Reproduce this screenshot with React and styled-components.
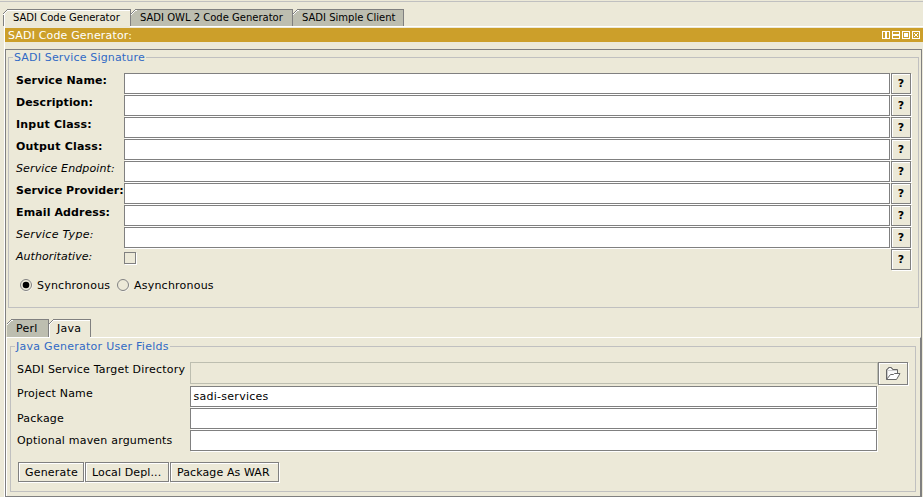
import React from "react";
import styled, { createGlobalStyle, css } from "styled-components";

const BG = "#ece9d8";
const GRAY = "#808080";
const SOFT = "#c0c0c0";
const DIM = "#bdbeb0";

const GlobalStyle = createGlobalStyle`
  * { box-sizing: border-box; }
  body { margin: 0; background: ${BG}; overflow: hidden; }
`;

const Window = styled.div`
  width: 923px;
  height: 497px;
  padding-top: 3px;
  background: linear-gradient(${SOFT}, ${SOFT}) 0 1px / 100% 1px no-repeat, ${BG};
  font: 11px/13px "DejaVu Sans", sans-serif;
  letter-spacing: 0.12px;
  color: #000;
  white-space: nowrap;
  display: flex;
  flex-direction: column;
`;

const TabStrip = styled.div`
  display: flex;
  flex: none;
  height: ${(p) => p.$height}px;
  margin: ${(p) => p.$margin};
`;

const TabBox = styled.div`
  position: relative;
  width: ${(p) => p.$width}px;
  height: 100%;
  border-top: 1px solid ${GRAY};
  border-right: 1px solid ${GRAY};
  background: ${(p) => (p.$active ? BG : DIM)};
  box-shadow: ${(p) => (p.$active ? "inset 1px 1px 0 #fff" : "none")};
  padding: ${(p) => p.$pad};
  letter-spacing: 0.25px;
  ${(p) =>
    p.$edge &&
    css`
      border-left: 1px solid ${GRAY};
    `}
  ${(p) =>
    p.$small &&
    css`
      font-size: 10px;
      line-height: 11px;
      letter-spacing: 0;
    `}
  ${(p) =>
    p.$active &&
    css`
      /* opens the pane's highlight line below the selected tab */
      &::after {
        content: "";
        position: absolute;
        left: 1px;
        right: 0;
        bottom: -1px;
        height: 1px;
        background: ${BG};
      }
    `}
`;

const Corner = styled.svg`
  position: absolute;
  left: ${(p) => (p.$edge ? -1 : 0)}px;
  top: -1px;
`;

function Tab({ children, ...rest }) {
  return (
    <TabBox {...rest}>
      <Corner $edge={rest.$edge} width="7" height="7" shapeRendering="crispEdges">
        <path d="M0 0h5v1h-1v1h-1v1h-1v1h-1v1h-1z" fill={BG} />
        <path
          d="M4 0h1v1h-1zM3 1h1v1h-1zM2 2h1v1h-1zM1 3h1v1h-1zM0 4h1v1h-1z"
          fill={GRAY}
        />
        <path
          d="M5 1h1v1h-2v1h-1v1h-1v1h-1v1h-1v-1h1v-1h1v-1h1v-1h1v-1z"
          fill="#fff"
        />
      </Corner>
      {children}
    </TabBox>
  );
}

const View = styled.div`
  flex: 1;
  min-height: 0;
  margin-left: 4px;
  padding-top: 1px;
  border-left: 1px solid #fff;
  border-top: 1px solid #fff;
`;

const TitleBar = styled.div`
  height: 14px;
  background: #cc9f2a;
  color: #fff;
  padding: 1px 3px 0;
  letter-spacing: 0.16px;
  display: flex;
  justify-content: space-between;
`;

const Controls = styled.div`
  display: flex;
  padding-top: 2px;
`;

const Body = styled.div`
  width: 917px;
  height: 448px;
  margin-top: 7px;
  border: 1px solid ${GRAY};
  display: flex;
  flex-direction: column;
`;

const Pane = styled.div`
  flex: 1;
  border-top: 1px solid #fff;
  border-left: 1px solid #fff;
  border-right: 1px solid ${GRAY};
`;

const Group = styled.section`
  flex: none;
  border: 1px solid ${SOFT};
  width: ${(p) => p.$width}px;
  height: ${(p) => p.$height}px;
  margin: ${(p) => p.$margin};
`;

const Legend = styled.h2`
  width: max-content;
  height: 13px;
  margin: -7px 0 9px 4px;
  padding: 0 1px;
  background: ${BG};
  color: #316ac5;
  font: inherit;
  letter-spacing: ${(p) => p.$ls}px;
`;

const Row = styled.div`
  display: grid;
  grid-template-columns: 108px 766px 21px;
  height: 22px;
  margin-left: 7px;
`;

const Label = styled.label`
  padding-top: 1px;
  font-weight: ${(p) => (p.$required ? 700 : 400)};
  font-style: ${(p) => (p.$required ? "normal" : "italic")};
  letter-spacing: ${(p) => p.$ls ?? 0.12}px;
`;

const Input = styled.div`
  height: 21px;
  border: 1px solid ${GRAY};
  background: #fff;
  box-shadow: 1px 1px 0 #fff;
  padding: 3px 2.5px;
  letter-spacing: 0.27px;
`;

const Button = styled.button`
  width: ${(p) => p.$width}px;
  height: ${(p) => p.$height || 21}px;
  padding: 0;
  border: 1px solid ${GRAY};
  border-radius: 0;
  background: ${BG};
  box-shadow: inset 1px 1px 0 #fff, 1px 1px 0 #fff;
  font: inherit;
  letter-spacing: ${(p) => p.$ls ?? 0.12}px;
  color: #000;
  display: flex;
  align-items: center;
  justify-content: center;
`;

const ActionButton = styled(Button)`
  justify-content: flex-start;
  padding-left: ${(p) => p.$inset}px;
`;

const Help = styled(Button)`
  margin-left: 1px;
  font-weight: 700;
`;

const Check = styled.div`
  width: 12px;
  height: 12px;
  margin-top: 3px;
  border: 1px solid ${GRAY};
  box-shadow: 1px 1px 0 #fff;
`;

const Radios = styled.div`
  display: flex;
  margin: 8px 0 0 11px;
`;

const RadioLabel = styled.label`
  display: flex;
  width: 97px;
  gap: 4px;
  letter-spacing: 0.22px;
`;

const Field = styled.div`
  display: grid;
  grid-template-columns: 173px ${(p) => p.$width}px auto;
  height: ${(p) => p.$height}px;
  margin-left: 6px;
`;

const FieldLabel = styled.label`
  padding-top: ${(p) => p.$top}px;
  letter-spacing: 0.2px;
`;

const DisabledInput = styled.div`
  height: 22px;
  border: 1px solid ${DIM};
`;

const Actions = styled.div`
  display: flex;
  gap: 1px;
  margin: 10px 0 0 7px;
`;

const rows = [
  { name: "Service Name:", required: true },
  { name: "Description:", required: true },
  { name: "Input Class:", required: true, ls: 0.2 },
  { name: "Output Class:", required: true, ls: 0.2 },
  { name: "Service Endpoint:", ls: 0.12 },
  { name: "Service Provider:", required: true, ls: 0.06 },
  { name: "Email Address:", required: true },
  { name: "Service Type:", ls: 0.3 },
  { name: "Authoritative:", check: true, ls: 0.06 },
];

const fields = [
  { name: "Project Name", value: "sadi-services", top: 1 },
  { name: "Package", top: 4 },
  { name: "Optional maven arguments", top: 4 },
];

function Radio({ on }) {
  return (
    <svg width="13" height="13">
      <circle cx="6.5" cy="6.5" r="5.5" fill="none" stroke="#fff" />
      <circle cx="6" cy="6" r="5.5" fill={BG} stroke={GRAY} />
      {on && <circle cx="6" cy="6" r="3.3" />}
    </svg>
  );
}

function WindowIcons() {
  return (
    <svg width="38" height="8" shapeRendering="crispEdges" fill="none" stroke="#fff">
      <path d="M.5 .5h7v7h-7zM10.5 .5h7v7h-7zM20.5 .5h7v7h-7zM30.5 .5h7v7h-7z" />
      <path
        d="M3 1h2v6h-2zM11 3h6v2h-6zM22 2h4v4h-4zM32 2h1v1h-1zM35 2h1v1h-1zM33 3h2v2h-2zM32 5h1v1h-1zM35 5h1v1h-1z"
        fill="#fff"
        stroke="none"
      />
    </svg>
  );
}

function Folder() {
  return (
    <svg width="16" height="14" fill="none" stroke="#666">
      <path d="M1.5 12.5V2.5h1v-1h1v-1h3v1h1v1h5v5" fill="#fafafa" />
      <path d="M2 3.5h10M2.5 4v7" stroke="#ccc" />
      <path d="M1.5 12.5L5.5 7.5h3l1-1h5.5L11.5 12.5z" fill="#fff" />
    </svg>
  );
}

export default function App() {
  return (
    <Window>
      <GlobalStyle />
      <TabStrip $height={17} $margin="6px 0 0 3px">
        <Tab $active $edge $small $width={128} $pad="2px 0 0 9px">SADI Code Generator</Tab>
        <Tab $small $width={162} $pad="2px 0 0 9px">SADI OWL 2 Code Generator</Tab>
        <Tab $small $width={111} $pad="2px 0 0 9px">SADI Simple Client</Tab>
      </TabStrip>
      <View>
        <TitleBar>
          <span>SADI Code Generator:</span>
          <Controls>
            <WindowIcons />
          </Controls>
        </TitleBar>
        <Body>
          <Group $width={911} $height={251} $margin="7px 0 0 2px">
            <Legend $ls={0.17}>SADI Service Signature</Legend>
            {rows.map((r) => (
              <Row key={r.name}>
                <Label $required={r.required} $ls={r.ls}>{r.name}</Label>
                {r.check ? <Check /> : <Input />}
                <Help $width={20}>?</Help>
              </Row>
            ))}
            <Radios>
              <RadioLabel><Radio on />Synchronous</RadioLabel>
              <RadioLabel><Radio />Asynchronous</RadioLabel>
            </Radios>
          </Group>
          <TabStrip $height={18} $margin="11px 0 0 1px">
            <Tab $width={42} $pad="2px 0 0 9px">Perl</Tab>
            <Tab $active $width={42} $pad="2px 0 0 8px">Java</Tab>
          </TabStrip>
          <Pane>
            <Group $width={906} $height={146} $margin="8px 0 0 3px">
              <Legend $ls={0.27}>Java Generator User Fields</Legend>
              <Field $width={688} $height={24}>
                <FieldLabel $top={1}>SADI Service Target Directory</FieldLabel>
                <DisabledInput />
                <Button $width={30} $height={23}><Folder /></Button>
              </Field>
              {fields.map((f) => (
                <Field key={f.name} $width={687} $height={22}>
                  <FieldLabel $top={f.top}>{f.name}</FieldLabel>
                  <Input>{f.value}</Input>
                </Field>
              ))}
              <Actions>
                <ActionButton $width={66} $height={20} $inset={6} $ls={0.2}>Generate</ActionButton>
                <ActionButton $width={84} $height={20} $inset={6} $ls={0.12}>Local Depl...</ActionButton>
                <ActionButton $width={109} $height={20} $inset={6} $ls={0.1}>Package As WAR</ActionButton>
              </Actions>
            </Group>
          </Pane>
        </Body>
      </View>
    </Window>
  );
}
